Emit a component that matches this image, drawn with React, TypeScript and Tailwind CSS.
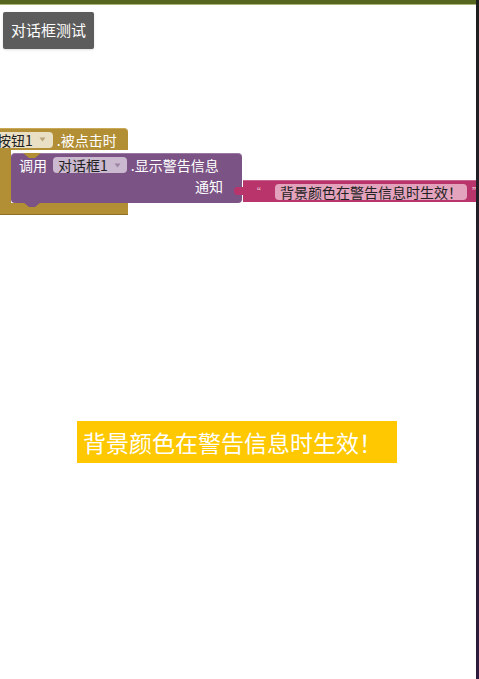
const cjk = { fontFamily: '"Noto Sans CJK SC", "Noto Sans", sans-serif' };

function Arrow({ color }: { color: string }) {
  return (
    <svg width="7" height="5" viewBox="0 0 7 5" className="ml-[6px]">
      <path d="M0.5 0.5 L6.5 0.5 L3.5 4.5 Z" fill={color} />
    </svg>
  );
}

function BlocksCanvas() {
  return (
    <div className="relative h-[250px] w-full overflow-hidden">
      {/* event block */}
      <div className="absolute left-0 top-[79px] w-[128px]">
        <div className="flex h-[22px] items-center rounded-tr-[4px] bg-[#b28e35] border-t border-[#c9a857]">
          <div className="ml-[-8px] flex h-[16px] items-center rounded-[4px] bg-[#e9dfc5] pl-[5px] pr-[7px] text-[14px] leading-none text-[#222]">
            按钮1
            <Arrow color="#b9a278" />
          </div>
          <span className="ml-[4px] text-[14px] leading-none text-white">.被点击时</span>
        </div>
        <div className="flex">
          <div className="h-[53px] w-[11px] bg-[#b28e35]" />
          <div className="flex-1" />
        </div>
        <div className="h-[12px] w-full bg-[#b28e35] border-b border-[#8e7129]" />
      </div>

      {/* call block */}
      <div className="absolute left-[11px] top-[104px] w-[231px]">
        <div className="relative flex h-[50px] flex-col rounded-[4px] bg-[#7b5385] border-t border-[#9a78a3]">
          <svg className="absolute left-[12px] top-[-1px]" width="18" height="6" viewBox="0 0 18 6">
            <path d="M0 0 L6 5 L12 5 L18 0 Z" fill="#b28e35" />
          </svg>
          <div className="flex h-[22px] items-center pl-[8px]">
            <span className="text-[14px] leading-none text-white">调用</span>
            <div className="ml-[6px] flex h-[16px] items-center rounded-[4px] bg-[#cbb9cf] pl-[5px] pr-[6px] text-[14px] leading-none text-[#222]">
              对话框1
              <Arrow color="#9d84a3" />
            </div>
            <span className="ml-[4px] text-[14px] leading-none text-white">.显示警告信息</span>
          </div>
          <div className="flex h-[20px] items-center justify-end pr-[19px]">
            <span className="text-[14px] leading-none text-white">通知</span>
          </div>
          <svg className="absolute bottom-[-5px] left-[12px]" width="18" height="6" viewBox="0 0 18 6">
            <path d="M0 0 L6 5 L12 5 L18 0 Z" fill="#7b5385" />
          </svg>
        </div>
      </div>

      {/* text block */}
      <div className="absolute left-[234px] top-[131px] flex items-center">
        <svg width="9" height="22" viewBox="0 0 9 22" className="shrink-0">
          <path d="M9 0 L9 22 L9 22 L9 15 L3 15 C1 15 0 13 0 11 C0 9 1 7 3 7 L9 7 Z" fill="#b8346a" />
        </svg>
        <div className="flex h-[22px] w-[236px] shrink-0 items-center whitespace-nowrap bg-[#b8346a] border-t border-[#c9648e]">
          <span className="ml-[8px] text-[10px] leading-none text-[#f3c9da]">“</span>
          <div className="ml-[14px] flex h-[16px] shrink-0 items-center rounded-[4px] bg-[#e3a3bd] px-[5px] text-[14px] leading-none text-[#222]">
            背景颜色在警告信息时生效！
          </div>
          <span className="ml-[5px] text-[10px] leading-none text-[#f3c9da]">”</span>
        </div>
      </div>
    </div>
  );
}

export default function App() {
  return (
    <div className="flex h-[679px] w-[479px] bg-white" style={cjk}>
      <div className="flex flex-1 flex-col">
        <div className="h-[4px] bg-[#56661f]" />
        <div className="h-px bg-[#a9b57d]" />
        <button className="ml-[3px] mt-[7px] flex h-[37px] w-[91px] items-center justify-center rounded-[2px] bg-[#5c5c5c] text-[15px] text-white shadow-sm">
          对话框测试
        </button>
        <BlocksCanvas />
        <div className="ml-[77px] mt-[122px] flex h-[42px] w-[320px] items-center whitespace-nowrap bg-[#ffc800] pl-[6px] text-[23px] text-white">
          背景颜色在警告信息时生效！
        </div>
      </div>
      <div className="w-[3px] bg-gradient-to-b from-[#1e1e1e] to-[#2c1b3c]" />
    </div>
  );
}
